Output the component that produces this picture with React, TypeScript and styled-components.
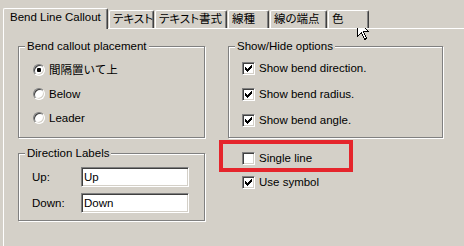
import React from 'react'
import styled, { createGlobalStyle } from 'styled-components'

const GlobalStyle = createGlobalStyle`
  html, body {
    margin: 0;
    padding: 0;
    background: #d4d0c8;
    overflow: hidden;
  }
  body {
    font-family: "Liberation Sans", "Noto Sans CJK JP", sans-serif;
    font-size: 11.5px;
    color: #000;
  }
`

const Dialog = styled.div`
  position: relative;
  width: 464px;
  height: 246px;
  padding: 8px 0 0 3px;
  box-sizing: border-box;
`

const TabRow = styled.div`
  position: relative;
  z-index: 1;
  display: flex;
  align-items: flex-end;
  height: 20px;
`

const Tab = styled.div<{ $w: number; $active?: boolean }>`
  box-sizing: border-box;
  width: ${p => p.$w}px;
  height: ${p => (p.$active ? 21 : 18)}px;
  margin-bottom: ${p => (p.$active ? -1 : 0)}px;
  margin-left: ${p => (p.$active ? 0 : 1)}px;
  padding: 2px 0 0 ${p => (p.$active ? 6 : 3)}px;
  background: #d4d0c8;
  border-left: 1px solid #fff;
  border-top: 1px solid #fff;
  border-right: 1px solid #404040;
  border-radius: 2px 2px 0 0;
  box-shadow: inset -1px 0 0 #808080;
  line-height: 13px;
  white-space: nowrap;
  font-feature-settings: "palt";
`

const Page = styled.div`
  box-sizing: border-box;
  height: 218px;
  border-top: 1px solid #fff;
  border-left: 1px solid #fff;
  padding: 11px 0 0 14px;
  display: grid;
  grid-template-columns: 187px 215px;
  column-gap: 23px;
  align-items: start;
`

const Column = styled.div`
  display: flex;
  flex-direction: column;
`

const Group = styled.fieldset<{ $gap?: number }>`
  margin: ${p => p.$gap ?? 0}px 0 0 0;
  padding: 0;
  min-width: 0;
  border: 1px solid #808080;
  box-shadow: 1px 1px 0 #fff, inset 1px 1px 0 #fff;
`

const Legend = styled.legend`
  margin-left: 6px;
  padding: 0 2px;
  line-height: 13px;
  background: #d4d0c8;
`

const GroupBody = styled.div<{ $pad: string }>`
  padding: ${p => p.$pad};
`

const OptionRow = styled.div<{ $h: number; $indent?: number }>`
  position: relative;
  display: flex;
  align-items: center;
  gap: 4px;
  height: ${p => p.$h}px;
  padding-left: ${p => p.$indent ?? 0}px;
  line-height: 13px;
  white-space: nowrap;
`

const RadioRing = styled.span`
  box-sizing: border-box;
  display: flex;
  align-items: center;
  justify-content: center;
  width: 12px;
  height: 12px;
  border-radius: 50%;
  border: 1px solid;
  border-color: #808080 #fff #fff #808080;
  box-shadow: inset 1px 1px 0 #404040, inset -1px -1px 0 #d4d0c8;
  background: #fff;
`

const RadioDot = styled.span`
  width: 4px;
  height: 4px;
  border-radius: 1px;
  background: #000;
`

const CheckBox = styled.span`
  box-sizing: border-box;
  display: flex;
  align-items: center;
  justify-content: center;
  width: 13px;
  height: 13px;
  border: 1px solid;
  border-color: #808080 #fff #fff #808080;
  box-shadow: inset 1px 1px 0 #404040, inset -1px -1px 0 #d4d0c8;
  background: #fff;
`

const FieldRow = styled.div`
  display: flex;
  align-items: center;
  height: 20px;
  & + & {
    margin-top: 6px;
  }
`

const FieldLabel = styled.span`
  width: 49px;
  line-height: 13px;
`

const TextBox = styled.input`
  box-sizing: border-box;
  width: 108px;
  height: 20px;
  margin: 0;
  padding: 0 0 0 2px;
  font: inherit;
  color: #000;
  background: #fff;
  border: 1px solid;
  border-color: #808080 #fff #fff #808080;
  box-shadow: inset 1px 1px 0 #404040, inset -1px -1px 0 #d4d0c8;
  outline: none;
`

const Highlight = styled.div`
  position: absolute;
  left: -9px;
  top: -6px;
  width: 134px;
  height: 32px;
  box-sizing: border-box;
  border: 4px solid #e5252c;
  pointer-events: none;
`

const Pointer = styled.svg`
  position: absolute;
  left: 357px;
  top: 20px;
`

const CHECK_COLS = [2, 3, 4, 3, 2, 1, 0]

const Radio = ({ checked, label }: { checked?: boolean; label: string }) => (
  <OptionRow $h={24}>
    <RadioRing>{checked && <RadioDot />}</RadioRing>
    <span>{label}</span>
  </OptionRow>
)

const Check = ({ checked }: { checked?: boolean }) => (
  <CheckBox>
    {checked && (
      <svg width="7" height="7" viewBox="0 0 7 7" shapeRendering="crispEdges">
        {CHECK_COLS.map((y, x) => (
          <rect key={x} x={x} y={y} width="1" height="3" fill="#000" />
        ))}
      </svg>
    )}
  </CheckBox>
)

const tabs = [
  { label: 'Bend Line Callout', w: 105 },
  { label: 'テキスト', w: 45 },
  { label: 'テキスト書式', w: 72 },
  { label: '線種', w: 41 },
  { label: '線の端点', w: 57 },
  { label: '色', w: 41 },
]

const App = () => {
  return (
    <Dialog>
      <GlobalStyle />
      <TabRow>
        {tabs.map((t, i) => (
          <Tab key={t.label} $w={t.w} $active={i === 0}>
            {t.label}
          </Tab>
        ))}
      </TabRow>
      <Page>
        <Column>
          <Group>
            <Legend>Bend callout placement</Legend>
            <GroupBody $pad="5px 0 7px 14px">
              <Radio checked label="間隔置いて上" />
              <Radio label="Below" />
              <Radio label="Leader" />
            </GroupBody>
          </Group>
          <Group $gap={9}>
            <Legend>Direction Labels</Legend>
            <GroupBody $pad="7px 0 7px 13px">
              <FieldRow>
                <FieldLabel>Up:</FieldLabel>
                <TextBox readOnly defaultValue="Up" />
              </FieldRow>
              <FieldRow>
                <FieldLabel>Down:</FieldLabel>
                <TextBox readOnly defaultValue="Down" />
              </FieldRow>
            </GroupBody>
          </Group>
        </Column>
        <Column>
          <Group>
            <Legend>Show/Hide options</Legend>
            <GroupBody $pad="2px 0 4px 13px">
              <OptionRow $h={26}>
                <Check checked />
                <span>Show bend direction.</span>
              </OptionRow>
              <OptionRow $h={26}>
                <Check checked />
                <span>Show bend radius.</span>
              </OptionRow>
              <OptionRow $h={26}>
                <Check checked />
                <span>Show bend angle.</span>
              </OptionRow>
            </GroupBody>
          </Group>
          <OptionRow $h={24} $indent={14} style={{ marginTop: 8 }}>
            <Check />
            <span>Single line</span>
            <Highlight />
          </OptionRow>
          <OptionRow $h={24} $indent={14}>
            <Check checked />
            <span>Use symbol</span>
          </OptionRow>
        </Column>
      </Page>
      <Pointer width="13" height="21" viewBox="0 0 13 21" shapeRendering="crispEdges">
        <path
          d="M0.5 0.5 L0.5 16.5 L4.5 12.5 L7.5 19.5 L9.5 18.5 L6.5 11.5 L11.5 11.5 Z"
          fill="#fff"
          stroke="#000"
          strokeWidth="1"
        />
      </Pointer>
    </Dialog>
  )
}

export default App
